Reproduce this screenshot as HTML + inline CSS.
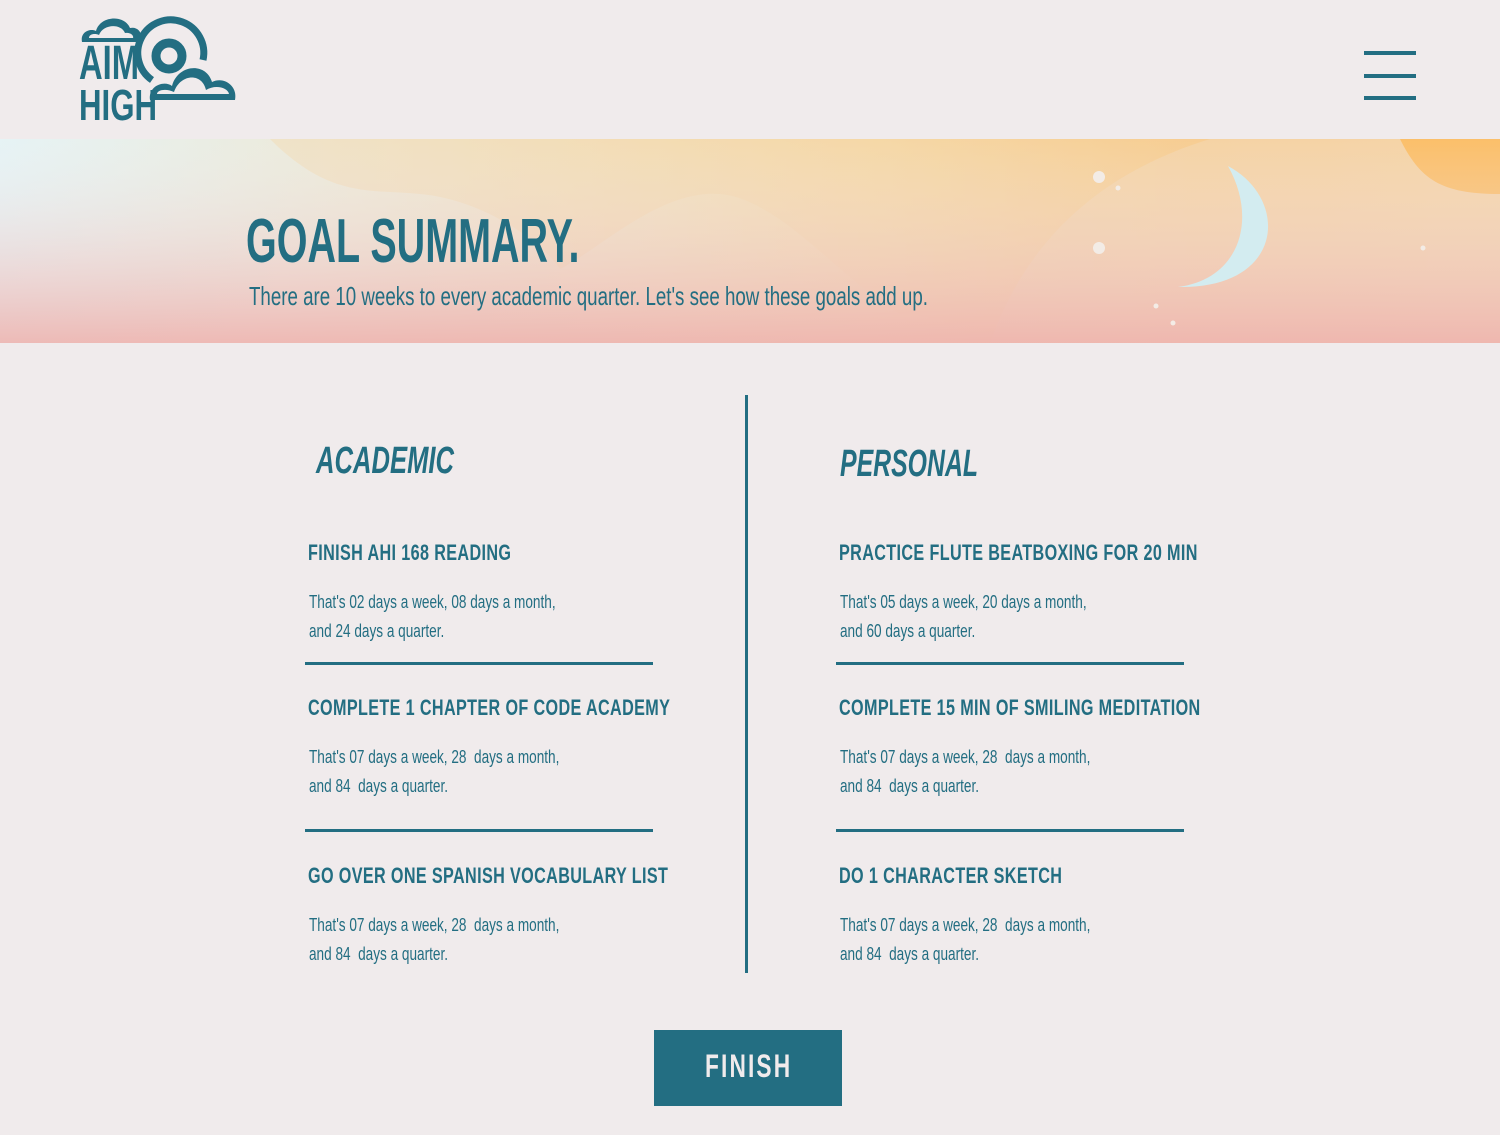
<!DOCTYPE html>
<html><head><meta charset="utf-8"><style>
*{margin:0;padding:0;box-sizing:border-box}
body{width:1500px;height:1135px;background:#f0ebec;font-family:"Liberation Sans Narrow","Liberation Sans",sans-serif;color:#236e82;position:relative;overflow:hidden}
.a{position:absolute;white-space:nowrap;transform-origin:0 0}
.banner{position:absolute;left:0;top:139px;width:1500px;height:204px;overflow:hidden;background:linear-gradient(90deg,#e6f3f5 0%,#efe6cf 30%,#f5d9a8 60%,#f7c98a 80%,#f8cd98 100%)}
.h{font-weight:bold;font-size:22px;letter-spacing:0.5px;transform:scaleX(0.735)}
.p{font-size:18px;line-height:29px;transform:scaleX(0.755)}
.rule{position:absolute;height:3px;background:#236e82;width:348px}
</style></head><body>
<svg class="a" style="left:0;top:0" width="260" height="130" viewBox="0 0 260 130">
<g fill="none" stroke="#236e82">
<path d="M152 80 A33 33 0 1 1 203 60" stroke-width="7"/>
<circle cx="169" cy="56" r="13" stroke-width="9"/>
</g>
<path d="M82 42 C80 32 90 28 96 31 C100 16 124 14 130 28 C138 26 144 34 140 42 Z" fill="#236e82"/>
<path d="M89 38 C89 34 95 33 99 35 C103 24 121 23 125 33 C131 32 134 36 133 38 Z" fill="#f0ebec"/>
<path d="M150 100 C148 86 164 80 172 86 C178 64 206 62 212 82 C224 76 238 86 235 100 Z" fill="#236e82"/>
<path d="M157 94 C157 90 166 88 174 92 C180 74 202 72 206 90 C216 84 228 88 229 94 Z" fill="#f0ebec"/>
<text x="79" y="79" font-family="Liberation Sans Narrow,Liberation Sans,sans-serif" font-weight="bold" font-size="48" fill="#236e82" textLength="60" lengthAdjust="spacingAndGlyphs">AIM</text>
<text x="79" y="120" font-family="Liberation Sans Narrow,Liberation Sans,sans-serif" font-weight="bold" font-size="44" fill="#236e82" textLength="78" lengthAdjust="spacingAndGlyphs">HIGH</text>
</svg>
<div class="a" style="left:1364px;top:51px;width:52px;height:4px;background:#236e82"></div>
<div class="a" style="left:1364px;top:74px;width:52px;height:4px;background:#236e82"></div>
<div class="a" style="left:1364px;top:96px;width:52px;height:4px;background:#236e82"></div>

<div class="banner">
<svg width="1500" height="204" style="position:absolute;left:0;top:0">
<defs><linearGradient id="v" x1="0" y1="0" x2="0" y2="1"><stop offset="0" stop-color="#f0ebec" stop-opacity="0"/><stop offset="1" stop-color="#eeb4b0" stop-opacity="0.9"/></linearGradient></defs>
<path d="M270 0 C330 60 370 50 420 55 C480 60 540 100 560 130 C600 110 660 50 720 55 C780 60 840 140 900 175 C960 180 1010 200 1040 204 L1040 204 L1500 204 L1500 0 Z" fill="#f5d4a0" opacity="0.35"/>
<path d="M990 204 C1020 120 1080 40 1210 0 L1500 0 L1500 204 Z" fill="#f3d6ad" opacity="0.7"/>
<path d="M1400 0 C1420 40 1440 55 1500 55 L1500 0 Z" fill="#fbbf6a"/>
<rect width="1500" height="204" fill="url(#v)"/>
<path d="M1228 27 C1290 60 1285 150 1178 148 C1240 140 1258 80 1228 27 Z" fill="#d3ecf0"/>
<circle cx="1099" cy="38" r="6" fill="#f3ece6"/><circle cx="1118" cy="49" r="2.5" fill="#f3ece6"/>
<circle cx="1099" cy="109" r="6" fill="#f3ece6"/><circle cx="1156" cy="167" r="2.5" fill="#f3ece6"/>
<circle cx="1173" cy="184" r="2.5" fill="#f3ece6"/><circle cx="1423" cy="109" r="2.5" fill="#f3ece6"/>
</svg>
</div>
<div class="a" style="left:246px;top:206px;font-size:62px;font-weight:bold;transform:scaleX(0.637)">GOAL SUMMARY.</div>
<div class="a" style="left:249px;top:281px;font-size:26px;transform:scaleX(0.72)">There are 10 weeks to every academic quarter. Let's see how these goals add up.</div>

<div class="a" style="left:745px;top:395px;width:3px;height:578px;background:#236e82"></div>

<div class="a" style="left:316px;top:440px;font-size:38px;font-weight:bold;font-style:italic;transform:scaleX(0.674)">ACADEMIC</div>
<div class="a" style="left:840px;top:443px;font-size:38px;font-weight:bold;font-style:italic;transform:scaleX(0.654)">PERSONAL</div>

<div class="a h" style="left:308px;top:540px">FINISH AHI 168 READING</div>
<div class="a p" style="left:309px;top:588px">That's 02 days a week, 08 days a month,<br>and 24 days a quarter.</div>
<div class="rule a" style="left:305px;top:662px"></div>
<div class="a h" style="left:308px;top:695px">COMPLETE 1 CHAPTER OF CODE ACADEMY</div>
<div class="a p" style="left:309px;top:743px">That's 07 days a week, 28&nbsp; days a month,<br>and 84&nbsp; days a quarter.</div>
<div class="rule a" style="left:305px;top:829px"></div>
<div class="a h" style="left:308px;top:863px">GO OVER ONE SPANISH VOCABULARY LIST</div>
<div class="a p" style="left:309px;top:911px">That's 07 days a week, 28&nbsp; days a month,<br>and 84&nbsp; days a quarter.</div>

<div class="a h" style="left:839px;top:540px">PRACTICE FLUTE BEATBOXING FOR 20 MIN</div>
<div class="a p" style="left:840px;top:588px">That's 05 days a week, 20 days a month,<br>and 60 days a quarter.</div>
<div class="rule a" style="left:836px;top:662px"></div>
<div class="a h" style="left:839px;top:695px">COMPLETE 15 MIN OF SMILING MEDITATION</div>
<div class="a p" style="left:840px;top:743px">That's 07 days a week, 28&nbsp; days a month,<br>and 84&nbsp; days a quarter.</div>
<div class="rule a" style="left:836px;top:829px"></div>
<div class="a h" style="left:839px;top:863px">DO 1 CHARACTER SKETCH</div>
<div class="a p" style="left:840px;top:911px">That's 07 days a week, 28&nbsp; days a month,<br>and 84&nbsp; days a quarter.</div>

<div class="a" style="left:654px;top:1030px;width:188px;height:76px;background:#236e82"></div>
<div class="a" style="left:705px;top:1048px;font-size:32px;font-weight:bold;letter-spacing:3px;color:#f0ebec;transform:scaleX(0.71)">FINISH</div>
</body></html>
